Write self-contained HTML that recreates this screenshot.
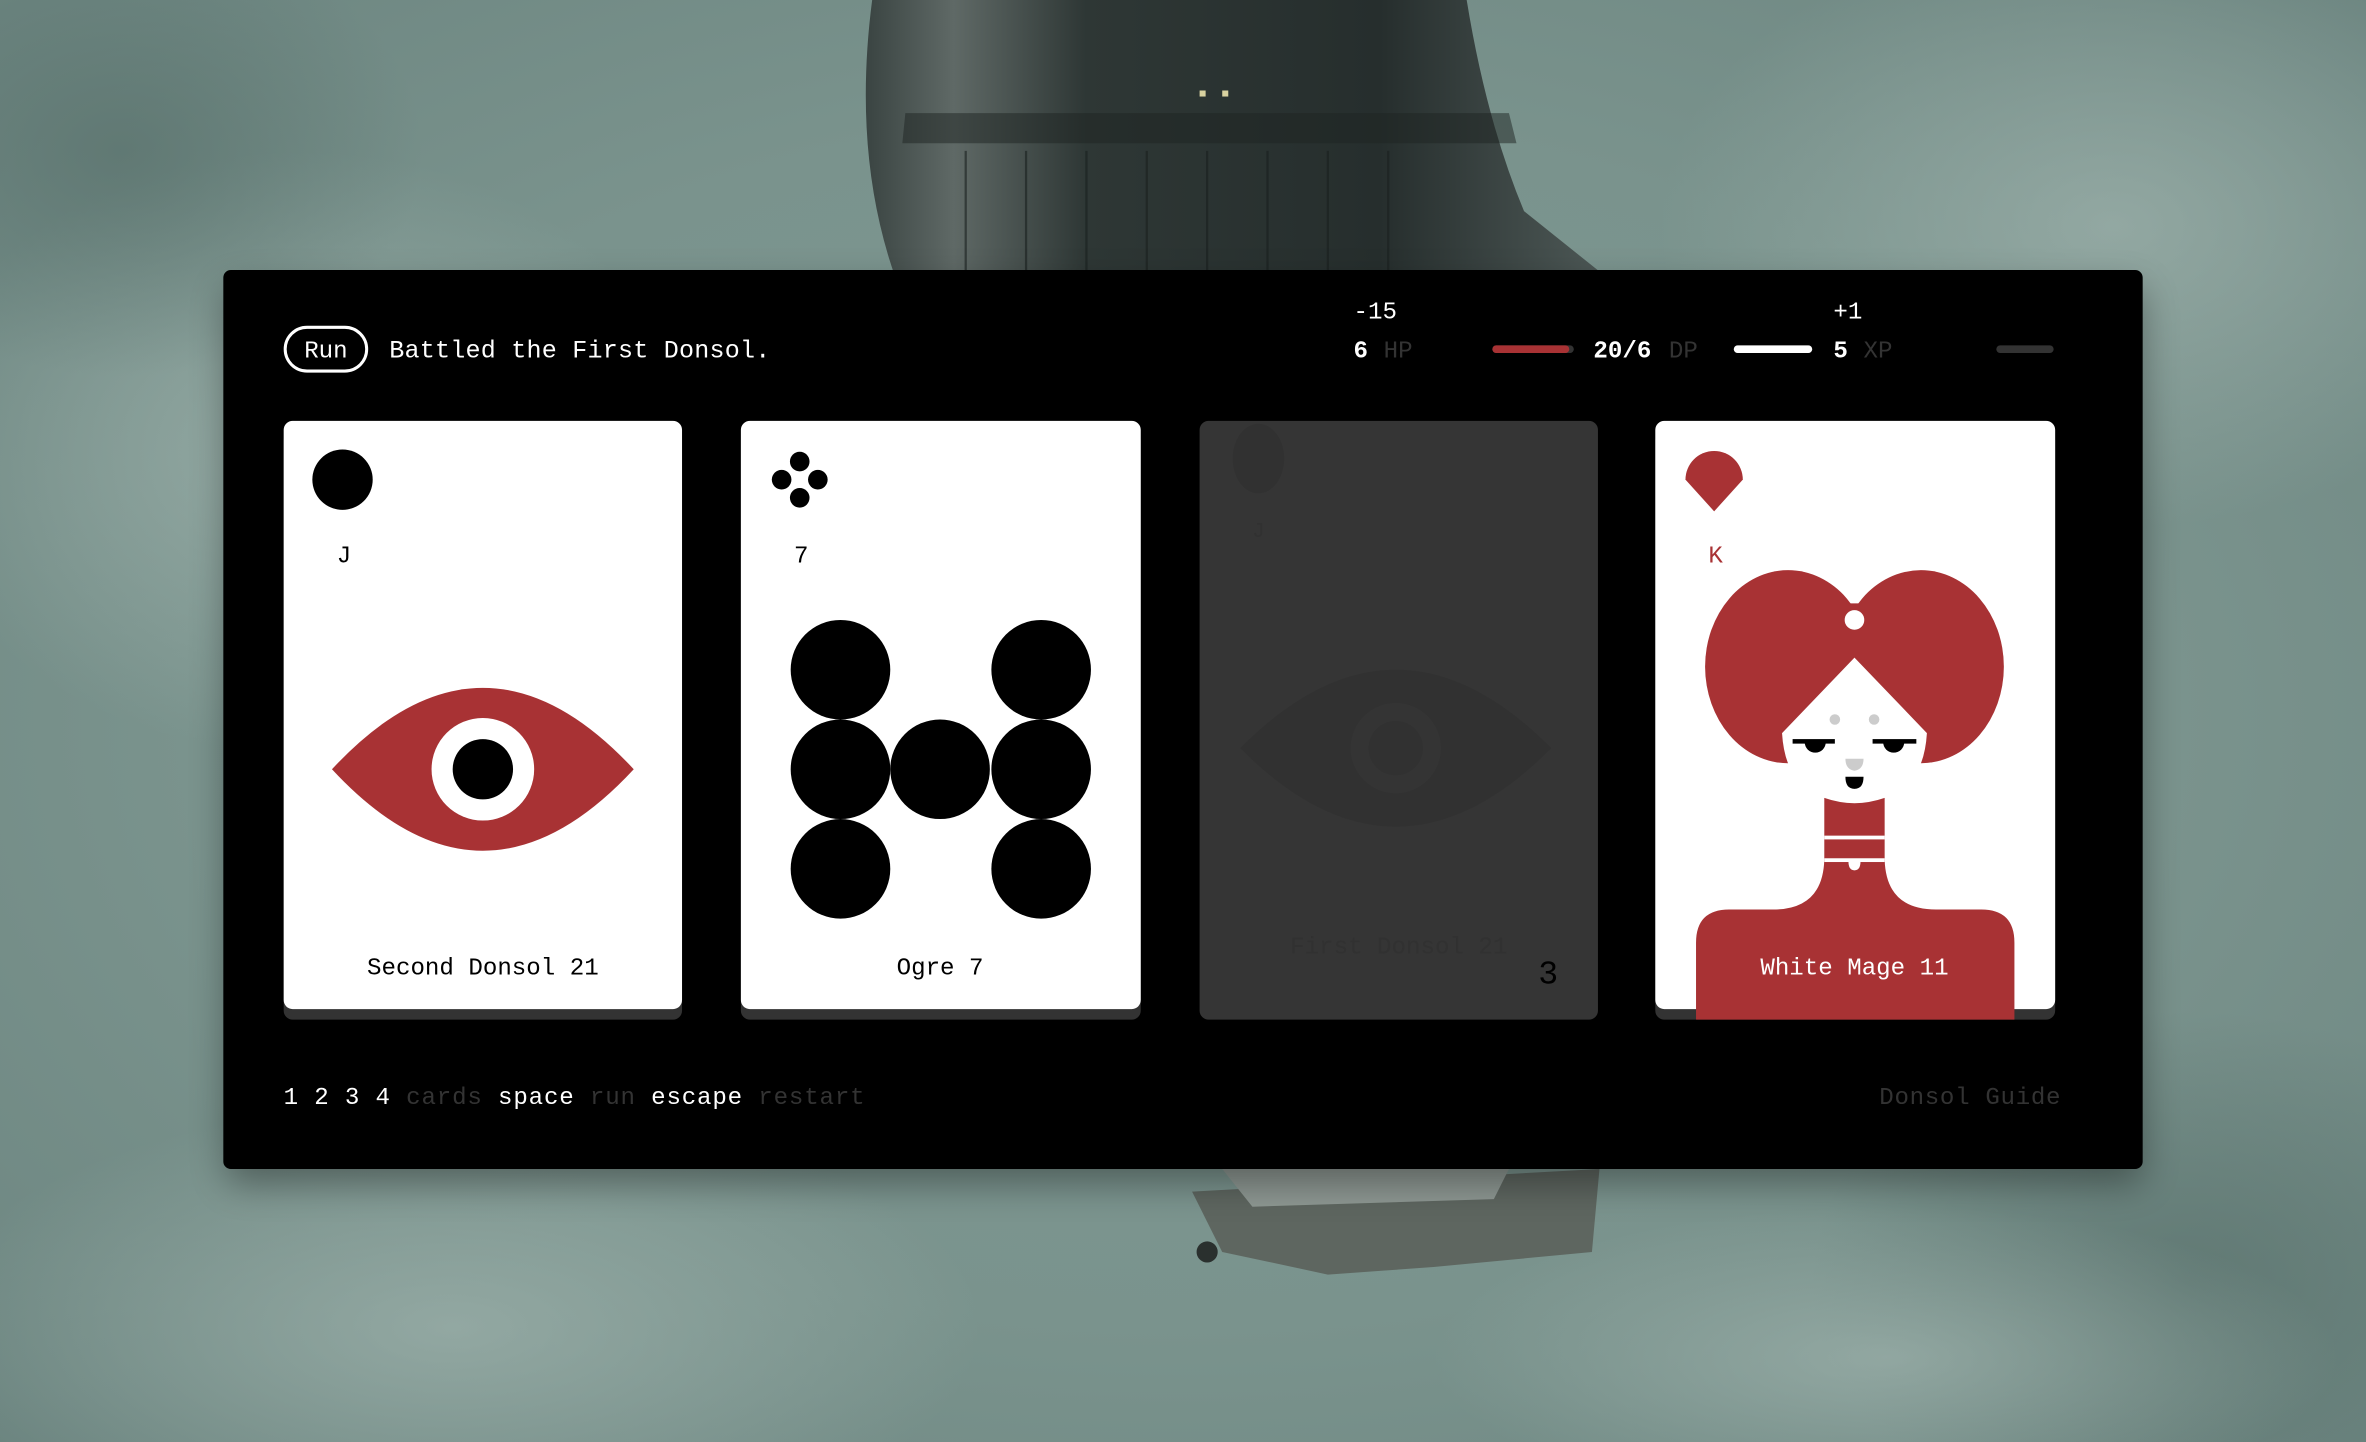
<!DOCTYPE html>
<html><head><meta charset="utf-8"><style>
html,body{margin:0;padding:0;width:2366px;height:1442px;overflow:hidden;background:#7b948e}
svg{display:block;position:absolute;left:0;top:0}
text{font-family:"Liberation Mono",monospace;}
</style></head><body>
<svg width="2366" height="1442" viewBox="0 0 1568 956" preserveAspectRatio="none" xmlns="http://www.w3.org/2000/svg">
<defs>
<radialGradient id="bg" cx="0.5" cy="0.5" r="0.7">
<stop offset="0" stop-color="#7f9893"/><stop offset="0.6" stop-color="#7a938d"/><stop offset="1" stop-color="#6c8580"/>
</radialGradient>
<radialGradient id="cl1" cx="0.5" cy="0.5" r="0.5"><stop offset="0" stop-color="#9fb3ad" stop-opacity="0.7"/><stop offset="1" stop-color="#9fb3ad" stop-opacity="0"/></radialGradient>
<radialGradient id="cl2" cx="0.5" cy="0.5" r="0.5"><stop offset="0" stop-color="#556d68" stop-opacity="0.6"/><stop offset="1" stop-color="#556d68" stop-opacity="0"/></radialGradient>
<linearGradient id="tw" x1="0" x2="1" y1="0" y2="0">
<stop offset="0" stop-color="#3a4442"/><stop offset="0.12" stop-color="#5f6966"/><stop offset="0.3" stop-color="#2e3735"/><stop offset="0.7" stop-color="#262e2d"/><stop offset="1" stop-color="#4d5856"/>
</linearGradient>
<filter id="sh" x="-10%" y="-10%" width="120%" height="130%"><feGaussianBlur stdDeviation="12"/></filter>
</defs>
<rect width="1568" height="956" fill="url(#bg)"/>
<ellipse cx="200" cy="300" rx="260" ry="200" fill="url(#cl1)"/>
<ellipse cx="1400" cy="150" rx="300" ry="200" fill="url(#cl1)"/>
<ellipse cx="300" cy="880" rx="350" ry="150" fill="url(#cl1)"/>
<ellipse cx="1450" cy="850" rx="250" ry="180" fill="url(#cl2)"/>
<ellipse cx="80" cy="100" rx="200" ry="150" fill="url(#cl2)"/>
<ellipse cx="1250" cy="900" rx="300" ry="100" fill="url(#cl1)"/>
<!-- tower -->
<path d="M578 0 L972 0 Q985 80 1010 140 L1060 180 L592 180 Q565 100 578 0 Z" fill="url(#tw)"/>
<path d="M600 75 L1000 75 L1005 95 L598 95 Z" fill="#1d2322" opacity="0.5"/>
<g stroke="#1a201f" stroke-width="1.5" opacity="0.6">
<line x1="640" y1="100" x2="640" y2="180"/><line x1="680" y1="100" x2="680" y2="180"/><line x1="720" y1="100" x2="720" y2="180"/><line x1="760" y1="100" x2="760" y2="180"/><line x1="800" y1="100" x2="800" y2="180"/><line x1="840" y1="100" x2="840" y2="180"/><line x1="880" y1="100" x2="880" y2="180"/><line x1="920" y1="100" x2="920" y2="180"/>
</g>
<rect x="795" y="60" width="4" height="4" fill="#d8d2a0"/><rect x="810" y="60" width="4" height="4" fill="#d8d2a0"/>
<!-- satellite -->
<path d="M790 790 L1060 775 L1055 830 L950 840 L880 845 L810 830 Z" fill="#5e6660"/>
<path d="M810 775 L1000 775 L990 795 L830 800 Z" fill="#8e9893"/>
<circle cx="800" cy="830" r="7" fill="#2a302e"/>
<!-- panel shadow -->
<rect x="150" y="190" width="1270" height="595" rx="8" fill="#000" opacity="0.35" filter="url(#sh)"/>
<rect x="148" y="179" width="1272" height="596" rx="5" fill="#000"/>
<!-- header -->
<rect x="189" y="217" width="54" height="29" rx="14.5" fill="none" stroke="#fff" stroke-width="2"/>
<text x="216" y="237" font-size="16" fill="#fff" text-anchor="middle">Run</text>
<text x="258" y="237" font-size="16.6" fill="#fff" letter-spacing="0.15">Battled the First Donsol.</text>
<text x="897" y="211" font-size="16" fill="#fff">-15</text>
<text x="897" y="237" font-size="16" fill="#fff" font-weight="bold">6</text>
<text x="917" y="237" font-size="16" fill="#333">HP</text>
<rect x="989" y="229" width="54" height="5" rx="2.5" fill="#333"/>
<rect x="989" y="229" width="51" height="5" rx="2.5" fill="#a83234"/>
<text x="1056" y="237" font-size="16" fill="#fff" font-weight="bold">20/6</text>
<text x="1106" y="237" font-size="16" fill="#333">DP</text>
<rect x="1149" y="229" width="52" height="5" rx="2.5" fill="#fff"/>
<text x="1215" y="211" font-size="16" fill="#fff">+1</text>
<text x="1215" y="237" font-size="16" fill="#fff" font-weight="bold">5</text>
<text x="1235" y="237" font-size="16" fill="#333">XP</text>
<rect x="1323" y="229" width="38" height="5" rx="2.5" fill="#333"/>
<!-- card 1 -->
<rect x="188" y="286" width="264" height="390" rx="6" fill="#333"/>
<rect x="188" y="279" width="264" height="390" rx="6" fill="#fff"/>
<circle cx="227" cy="318" r="20" fill="#000"/>
<text x="228" y="373" font-size="16" fill="#000" text-anchor="middle">J</text>
<path d="M220 510 Q320 402 420 510 Q320 618 220 510 Z" fill="#a83234"/>
<circle cx="320" cy="510" r="34" fill="#fff"/>
<circle cx="320" cy="510" r="20" fill="#000"/>
<text x="320" y="646" font-size="16" fill="#000" text-anchor="middle">Second Donsol 21</text>
<!-- card 2 -->
<rect x="491" y="286" width="265" height="390" rx="6" fill="#333"/>
<rect x="491" y="279" width="265" height="390" rx="6" fill="#fff"/>
<circle cx="530" cy="306" r="6.5" fill="#000"/><circle cx="530" cy="330" r="6.5" fill="#000"/>
<circle cx="518" cy="318" r="6.5" fill="#000"/><circle cx="542" cy="318" r="6.5" fill="#000"/>
<text x="531" y="373" font-size="16" fill="#000" text-anchor="middle">7</text>
<g fill="#000">
<circle cx="557" cy="444" r="33"/><circle cx="690" cy="444" r="33"/>
<circle cx="557" cy="510" r="33"/><circle cx="623" cy="510" r="33"/><circle cx="690" cy="510" r="33"/>
<circle cx="557" cy="576" r="33"/><circle cx="690" cy="576" r="33"/>
</g>
<text x="623" y="646" font-size="16" fill="#000" text-anchor="middle">Ogre 7</text>
<!-- card 3 -->
<rect x="795" y="279" width="264" height="397" rx="6" fill="#353535"/>
<ellipse cx="834" cy="304" rx="17" ry="23" fill="#313131"/>
<text x="834" y="356" font-size="14" fill="#313131" text-anchor="middle">J</text>
<path d="M822 496 Q925 392 1028 496 Q925 600 822 496 Z" fill="#313131"/>
<circle cx="925" cy="496" r="30" fill="#343434"/>
<circle cx="925" cy="496" r="18" fill="#313131"/>
<text x="927" y="632" font-size="16" fill="#313131" text-anchor="middle">First Donsol 21</text>
<text x="1026" y="652" font-size="22" fill="#000" text-anchor="middle">3</text>
<!-- card 4 -->
<rect x="1097" y="286" width="265" height="390" rx="6" fill="#333"/>
<rect x="1097" y="279" width="265" height="390" rx="6" fill="#fff"/>
<path d="M1117 318 A19 19 0 0 1 1155 318 L1136 339 Z" fill="#a83234"/>
<text x="1137" y="373" font-size="16" fill="#a83234" text-anchor="middle">K</text>
<ellipse cx="1185" cy="442" rx="55" ry="64" fill="#a83234"/>
<ellipse cx="1273" cy="442" rx="55" ry="64" fill="#a83234"/>
<path d="M1200 400 L1258 400 L1258 470 L1200 470 Z" fill="#a83234"/>
<circle cx="1229" cy="411" r="6.5" fill="#fff"/>
<path d="M1229 436 L1181 486 Q1183 520 1208 529 Q1229 535 1250 529 Q1275 520 1277 486 Z" fill="#fff"/>
<circle cx="1216" cy="477" r="3.5" fill="#ccc"/><circle cx="1242" cy="477" r="3.5" fill="#ccc"/>
<rect x="1188" y="490" width="28" height="3" fill="#000"/><rect x="1241" y="490" width="29" height="3" fill="#000"/>
<path d="M1196 492 A7 7 0 0 0 1210 492 Z" fill="#000"/>
<path d="M1248 492 A7 7 0 0 0 1262 492 Z" fill="#000"/>
<path d="M1223 503 L1235 503 Q1235 510 1229 511 Q1223 510 1223 503 Z" fill="#ccc"/>
<path d="M1223 515 L1235 515 Q1235 523 1229 523 Q1223 523 1223 515 Z" fill="#000"/>
<path d="M1124 676 L1124 625 Q1124 603 1146 603 L1175 603 Q1208 603 1209 570 L1209 529 Q1229 536 1249 529 L1249 570 Q1250 603 1283 603 L1313 603 Q1335 603 1335 625 L1335 676 Z" fill="#a83234"/>
<rect x="1209" y="554" width="40" height="2.5" fill="#fff"/>
<rect x="1209" y="569" width="40" height="2.5" fill="#fff"/>
<path d="M1225 571 L1233 571 Q1233 577 1229 577 Q1225 577 1225 571 Z" fill="#fff"/>
<text x="1229" y="646" font-size="16" fill="#fff" text-anchor="middle">White Mage 11</text>
<!-- footer -->
<text x="188" y="732" font-size="16" letter-spacing="0.55" xml:space="preserve"><tspan fill="#fff">1 2 3 4</tspan><tspan fill="#333"> cards</tspan><tspan fill="#fff"> space</tspan><tspan fill="#333"> run</tspan><tspan fill="#fff"> escape</tspan><tspan fill="#333"> restart</tspan></text>
<text x="1366" y="732" font-size="16" letter-spacing="0.45" fill="#333" text-anchor="end">Donsol Guide</text>
</svg>
</body></html>
